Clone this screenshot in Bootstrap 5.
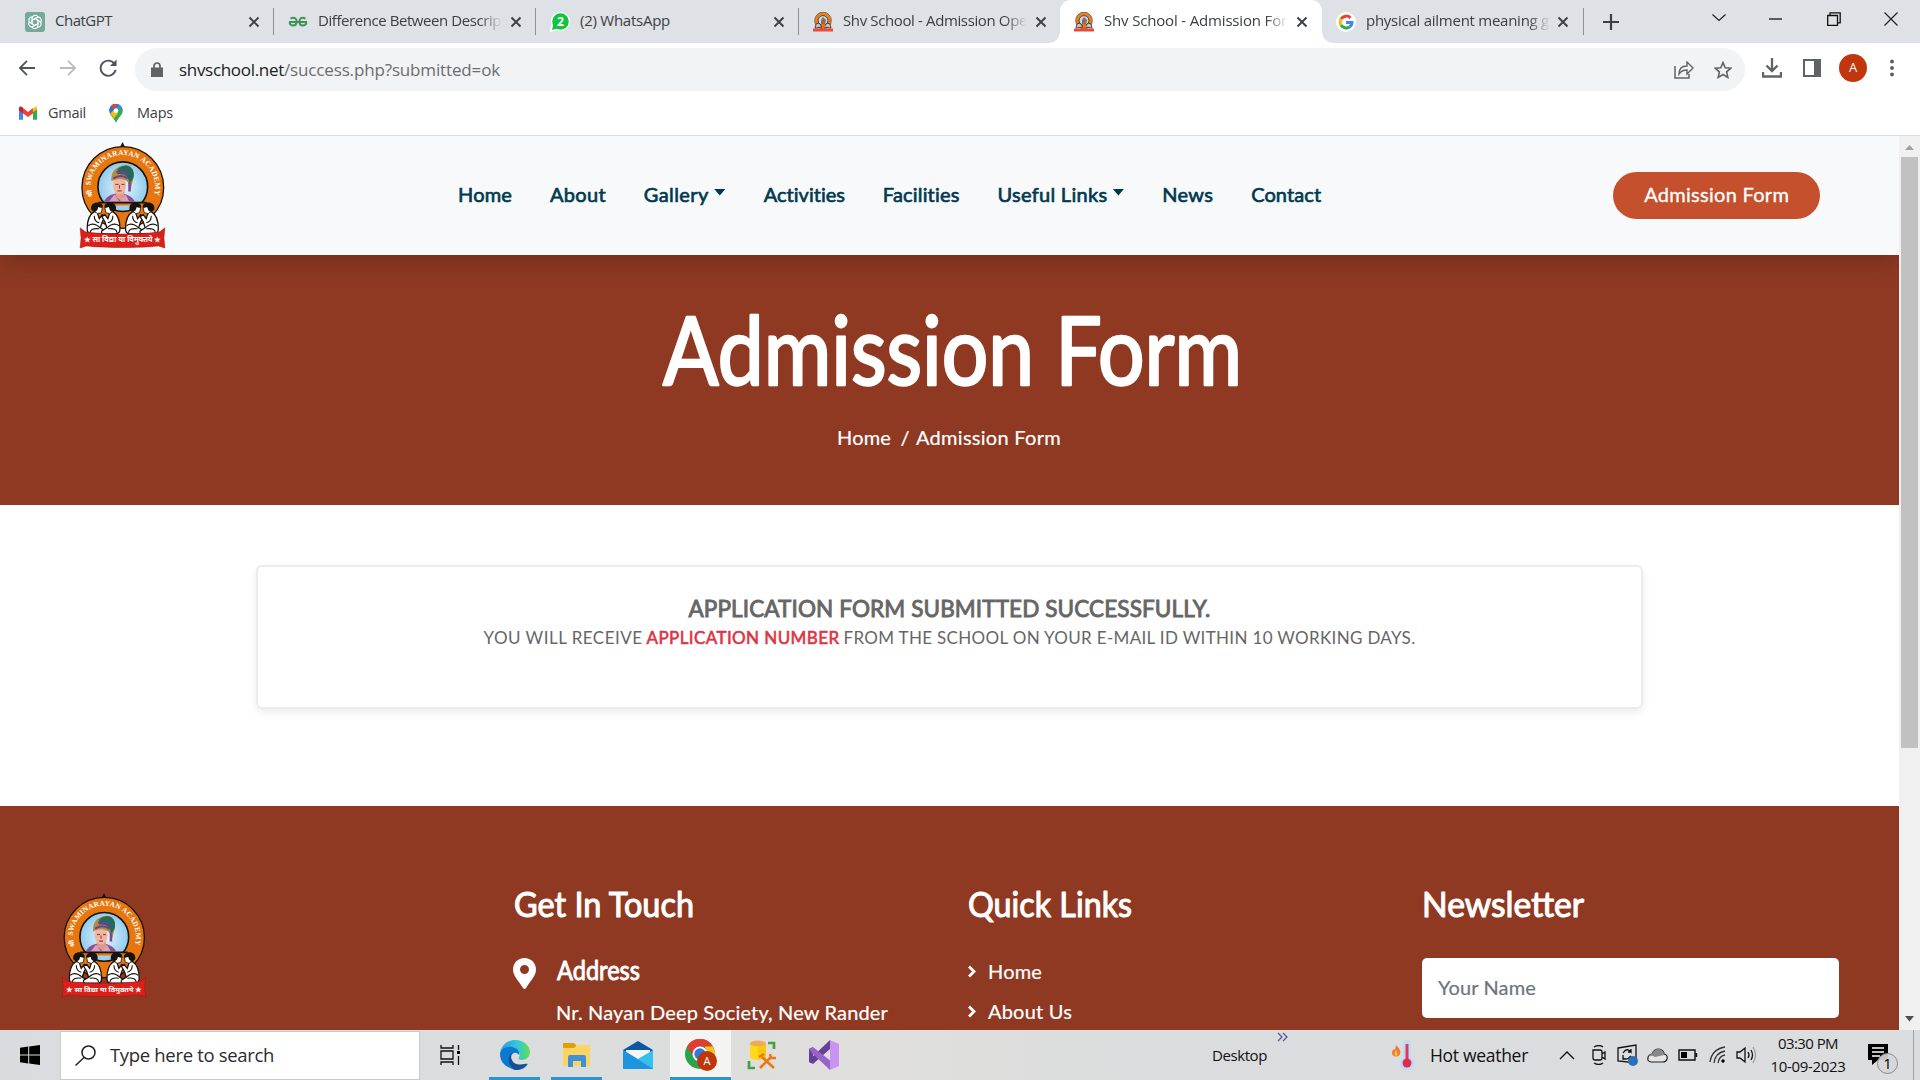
<!DOCTYPE html>
<html lang="en">
<head>
<meta charset="utf-8">
<title>Shv School - Admission Form</title>
<link href="https://cdn.jsdelivr.net/npm/bootstrap@5.3.0/dist/css/bootstrap.min.css" rel="stylesheet">
<style>
body{width:1920px;height:1080px;overflow:hidden;font-family:"Open Sans","Noto Sans",sans-serif;color:#3c4043}
svg{display:block;flex:none}
[data-w]{white-space:nowrap;display:inline-block;flex:none}
.tabstrip{height:43px;background:#dee1e6}
.btab{width:262px;height:43px;padding-left:25px;font-size:15px;position:relative;flex:none}
.btab .fav{width:20px;height:20px;margin-right:10px}
.btab .ttl{width:184px;overflow:hidden;white-space:nowrap;height:26px;line-height:22px}
.btab .fade-end{-webkit-mask-image:linear-gradient(90deg,#000 88%,transparent);mask-image:linear-gradient(90deg,#000 88%,transparent)}
.btab .cls{margin-left:9px}
.btab.sep{border-right:1.5px solid #8e9196;border-image:linear-gradient(transparent 9px,#8e9196 9px,#8e9196 34px,transparent 34px) 1}
.btab.on{background:#fff;border-radius:11px 11px 0 0}
.btab.on::before,.btab.on::after{content:"";position:absolute;bottom:0;width:11px;height:11px}
.btab.on::before{left:-11px;background:radial-gradient(circle at 0 0,transparent 10.5px,#fff 11px)}
.btab.on::after{right:-11px;background:radial-gradient(circle at 100% 0,transparent 10.5px,#fff 11px)}
.toolrow{height:48px;padding:5px 0 0 18px}
.omni{width:1610px;height:43px;border-radius:22px;background:#f1f3f4;margin-left:15px;padding-left:16px;font-size:17px;color:#6a6e73}
.omni b{font-weight:400;color:#202124}
.marks{height:45px;border-bottom:1.5px solid #d9dbdd;padding:0 0 0 19px;font-size:14.5px}
.avatar{width:28px;height:28px;border-radius:50%;background:#c1360d;color:#fff;font-size:13px}
.viewport{height:894px;overflow:hidden}
.site{width:1899px;height:894px;overflow:hidden;font-family:Lato,"Open Sans",sans-serif;font-size:20px;background:#fff}
.sitenav{height:119px;background:#f8f9fb;box-shadow:0 2px 26px rgba(0,0,0,.28);position:relative;z-index:2;padding-left:79px}
.navitems{gap:37.9px;margin-left:292px;color:#00394f}
.navitems span{-webkit-text-stroke:.65px #00394f;line-height:28px}
.navitems,.admit span{padding-bottom:4px}
.caretd{width:12px;height:7px;margin-left:5px;background:#00394f;clip-path:polygon(0 0,100% 0,50% 100%);margin-top:-3px}
.admit{width:207px;height:47px;border-radius:24px;background:#c5502d;color:#fff;margin-left:292px}
.admit span{-webkit-text-stroke:.3px #fff}
.hero,.foot{background:#8f3922;color:#fff}
.hero{height:250px;padding-top:44px}
.crumbs{margin-top:-1px;line-height:28px;padding-left:837px;gap:9.5px}
.crumbs span,.foot span{-webkit-text-stroke:.2px currentColor}
.body-part{height:301px;padding:60px 256px 0}
.notice{height:144px;border:2px solid #ebecec;border-radius:6px;box-shadow:0 4px 8px rgba(0,0,0,.07);color:#666;padding-top:28px}
.notice h5{font-size:22.5px;font-weight:400;line-height:28px;margin:0;-webkit-text-stroke:.9px #666}
.notice p{font-size:17px;line-height:30px;margin:0}
.notice .num{color:#dc3545;-webkit-text-stroke:.6px #dc3545}
.foot{height:224px;padding:78px 60px 0 61px}
.hand{overflow:visible}
.hand text{font-family:Lato,sans-serif;fill:#fff;stroke:#fff;stroke-linejoin:round}
.fcol{width:454px;flex:none}
.flogo{width:452px;padding-top:9px;flex:none}
.nameinput{width:417px;height:60px;background:#fff;border-radius:5px;color:#6c757d;padding-left:16px;padding-bottom:2px}
.links{line-height:40px;margin-top:-2px}
.sbar{width:21px;background:#f0f0f0}
.thumb{width:17px;height:591px;background:#c1c1c1}
.taskbar{height:50px;background:linear-gradient(90deg,#d9dbde,#dcdddd 35%,#e0dfdc 45%,#dadcdd 60%,#dcdddf);color:#111}
.searchbox{width:360px;height:49px;background:#fff;border:1px solid #c9cacc;font-size:18.5px;color:#2b2b2b;padding-left:14px}
.tk{height:50px;position:relative}
.tk.run::after{content:"";position:absolute;left:5px;right:5px;bottom:0;height:3px;background:#2b95d0}
.tk.cur{background:#f4f4f3}.tk.cur::after{left:0;right:0}
.clock{width:86px;font-size:15px;line-height:23px}
</style>
</head>
<body>
<svg width="0" height="0" class="position-absolute">
<defs>
<path id="arc" d="M41.600 66A32 32 0 1 1 103 66"/>
<radialGradient id="sky"><stop offset="0" stop-color="#e8f6fd"/><stop offset="1" stop-color="#8fcbee"/></radialGradient>
<clipPath id="portrait"><path d="M45 30h55v41H45z"/></clipPath>
<linearGradient id="edgeA" x1="0" x2="1"><stop offset="0" stop-color="#1fa0e6"/><stop offset=".6" stop-color="#35c8d8"/><stop offset="1" stop-color="#63e04a"/></linearGradient>
<symbol id="kid" viewBox="0 0 20 33">
<path d="M8 10C3 13 1 20 1 27q0 5 4 5h12q3 0 2-3l-5-3 2-6 3-5-3-2-3 4-2-6z" fill="#fff" stroke="#17130f" stroke-width="1.300"/>
<path d="M12 5l4 1-1 5-4 1-3-3z" fill="#fff" stroke="#17130f" stroke-width=".8"/>
<path d="M5 8C4 3 8 .500 12 1q5 1 4.500 5L12 5.500l-1 3q-3 3-6-.500z" fill="#17130f"/>
<path d="M8 14q0 6 5 7M2 24q5-4 12 2M4 31q0-5 9-4" fill="none" stroke="#17130f" stroke-width="1.100"/>
</symbol>
<symbol id="crest" viewBox="29 12 86 106">
<path d="M72 12l2.500 5h-5z" fill="#17130f"/>
<circle cx="72.300" cy="57" r="40.500" fill="#e8760f" stroke="#17130f" stroke-width="1.300"/>
<circle cx="72.300" cy="56.300" r="24.600" fill="url(#sky)" stroke="#17130f" stroke-width="1.600"/>
<path d="M52 72h40v3H52z" fill="#e8760f"/>
<g clip-path="url(#portrait)">
<path d="M53 73c2-7 8-9 12-10h8c6 2 10 4 12 10z" fill="#8e4a9b"/><path d="M57 73l7-9 5 7 6-7 5 9z" fill="#d9a0b8"/><path d="M65 58h9v8l-4 4-5-4z" fill="#dd9b88"/>
<ellipse cx="69" cy="55" rx="6.500" ry="9" fill="#f2b6a0"/>
<path d="M61 51c-1-9 4-15 13-16 7-1 10 5 9 12l-3 12c-1-6-3-9-8-10-4-1-8 0-11 2z" fill="#b58b3d"/>
<path d="M67 39c5-5 14-5 16 3 1 6-2 9-4 11-1-7-5-10-12-9z" fill="#226b5a"/><path d="M63 48c5-3 10-3 14 0M66 42c4-1 9 0 12 3" stroke="#6b3f9b" stroke-width="2" fill="none"/>
<path d="M79 52v9" stroke="#7a4595" stroke-width="2.500"/><path d="M65 54h3M71 54h3M69 55v3" stroke="#603028" stroke-width=".9"/><path d="M67 60.500h4" stroke="#b62f45" stroke-width="1.200"/>
</g>
<path d="M48 72h48" stroke="#17130f" stroke-width="1.800"/>
<text x="0" y="0" transform="translate(42.500 66) rotate(-102)" font-family="Noto Sans,sans-serif" font-size="6.500" font-weight="700" fill="#fff">श्री</text>
<text font-family="Liberation Serif,serif" font-weight="700" font-size="7.400" fill="#fff"><textPath href="#arc" textLength="106" lengthAdjust="spacing" startOffset="11">SWAMINARAYAN ACADEMY</textPath></text>
<use href="#kid" x="36" y="71" width="20" height="33"/>
<g transform="translate(124.500 0) scale(-1 1)"><use href="#kid" x="54" y="71" width="20" height="33"/></g>
<use href="#kid" x="74" y="71" width="20" height="33"/>
<g transform="translate(144.500 0) scale(-1 1)"><use href="#kid" x="36" y="71" width="20" height="33"/></g>
<path d="M30 97l5 4c20 3 54 3 74 0l5-4-1 10 1 10-6-2c-20 2-52 2-72 0l-6 2 1-10z" fill="#dc2019" stroke="#9e120e" stroke-width=".5"/>
<text x="72" y="111.500" text-anchor="middle" font-family="Noto Sans,sans-serif" font-size="7" font-weight="700" fill="#fff" textLength="76" lengthAdjust="spacingAndGlyphs">★ सा विद्या या विमुक्तये ★</text>
</symbol>
<symbol id="minicrest" viewBox="0 0 20 20"><circle cx="10" cy="8.500" r="8.300" fill="#e8831f" stroke="#6b5136" stroke-width=".8"/><circle cx="10" cy="8.500" r="4.900" fill="#b9def0" stroke="#3a2a20" stroke-width=".8"/><path d="M8 13V8l2-3 3 3-1 5z" fill="#a4625d"/><path d="M2 16l1-4 3-1 3 4zM18 16l-1-4-3-1-3 4z" fill="#c9c4bd" stroke="#30261f" stroke-width=".8"/><path d="M8 12h4v3l-2 2z" fill="#e0790d"/><path d="M0 16.500h20v3H0z" fill="#ea4a3c"/></symbol>
<symbol id="x" viewBox="0 0 12 12"><path d="M1.500 1.500l9 9M10.500 1.500l-9 9" stroke="#3c4043" stroke-width="1.900"/></symbol>
</defs></svg>

<header class="tabstrip d-flex align-items-center">
 <div class="btab sep d-flex align-items-center" style="width:274px">
  <svg class="fav" viewBox="0 0 20 20"><rect width="20" height="20" rx="3" fill="#75a99a"/><g fill="none" stroke="#fff" stroke-width="1.100"><path id="pet" d="M7 10V6.500a3.200 3.200 0 0 1 6-1.500M10 6.600l3.500 2"/><use href="#pet" transform="rotate(60 10 10)"/><use href="#pet" transform="rotate(120 10 10)"/><use href="#pet" transform="rotate(180 10 10)"/><use href="#pet" transform="rotate(240 10 10)"/><use href="#pet" transform="rotate(300 10 10)"/></g></svg>
  <div class="ttl"><span data-w="57">ChatGPT</span></div><svg class="cls" width="12" height="12"><use href="#x"/></svg></div>
 <div class="btab sep d-flex align-items-center" style="padding-left:14px">
  <svg class="fav" viewBox="0 0 20 20"><path d="M1 10h18M2.500 6.500c5-2 6.500 1 6 4-.6 4-6 4-7 0M17.500 6.500c-5-2-6.500 1-6 4 .6 4 6 4 7 0" fill="none" stroke="#3f9556" stroke-width="2"/></svg>
  <div class="ttl fade-end"><span data-w="183">Difference Between Descrip</span></div><svg class="cls" width="12" height="12" style="margin-left:8px"><use href="#x"/></svg></div>
 <div class="btab sep d-flex align-items-center" style="width:263px;padding-left:14px">
  <svg class="fav" viewBox="0 0 20 20"><circle cx="10.500" cy="9.500" r="9.500" fill="#fff"/><path d="M0 20l1-7 6 5z" fill="#fff"/><circle cx="10.500" cy="9.500" r="8.300" fill="#15c343"/><path d="M2 18l1.500-6 4 4.500z" fill="#15c343"/><text x="10.500" y="14" text-anchor="middle" font-size="12" font-weight="700" fill="#fff">2</text></svg>
  <div class="ttl"><span data-w="90">(2) WhatsApp</span></div><svg class="cls" width="12" height="12"><use href="#x"/></svg></div>
 <div class="btab d-flex align-items-center" style="width:261px;padding-left:14px"><svg class="fav" width="20" height="20"><use href="#minicrest"/></svg>
  <div class="ttl fade-end"><span data-w="184">Shv School - Admission Ope</span></div><svg class="cls" width="12" height="12" style="margin-left:8px"><use href="#x"/></svg></div>
 <div class="btab on d-flex align-items-center" style="padding-left:14px"><svg class="fav" width="20" height="20"><use href="#minicrest"/></svg>
  <div class="ttl fade-end"><span data-w="183">Shv School - Admission For</span></div><svg class="cls" width="12" height="12" style="margin-left:8px"><use href="#x"/></svg></div>
 <div class="btab sep d-flex align-items-center" style="width:262px;padding-left:14px">
  <svg class="fav" viewBox="0 0 20 20"><circle cx="10" cy="10" r="10" fill="#fff"/><g fill="none" stroke-width="3"><path d="M14.500 6a6 6 0 0 0-9.500 1" stroke="#ea4335"/><path d="M5 7a6 6 0 0 0 0 6" stroke="#fbbc05"/><path d="M5 13a6 6 0 0 0 8.500 2" stroke="#34a853"/><path d="M13.500 15c2-1.300 2.500-3 2.500-4.500h-6" stroke="#4285f4"/></g></svg>
  <div class="ttl fade-end"><span data-w="183">physical ailment meaning g</span></div><svg class="cls" width="12" height="12" style="margin-left:7px"><use href="#x"/></svg></div>
 <svg width="16" height="16" style="margin-left:19px"><path d="M8 0v16M0 8h16" stroke="#3c4043" stroke-width="2.200"/></svg>
 <svg class="mb-2" width="14" height="8" style="margin-left:93px"><path d="M.500 .500l6.500 6 6.500-6" fill="none" stroke="#222" stroke-width="1.200"/></svg>
 <svg width="13" height="2" style="margin:0 0 5px 43px"><path d="M0 1h13" stroke="#111" stroke-width="1.300"/></svg>
 <svg width="14" height="14" style="margin:0 0 6px 45px"><path d="M.700 3.500h9.800v9.800H.700zM3 3.500V.800h10.200v10h-2.700" fill="none" stroke="#111" stroke-width="1.300"/></svg>
 <svg width="14" height="14" style="margin:0 0 6px 43px"><path d="M.500 .500l13 13M13.500 .500l-13 13" stroke="#222" stroke-width="1.200"/></svg>
</header>

<div class="toolrow d-flex align-items-center bg-white">
 <svg class="mb-1" width="18" height="16" viewBox="0 0 20 18"><path d="M19 9H3M10 1L2 9l8 8" fill="none" stroke="#50545a" stroke-width="2"/></svg>
 <svg class="mb-1" width="18" height="16" viewBox="0 0 20 18" style="margin-left:23px"><path d="M1 9h16M10 1l8 8-8 8" fill="none" stroke="#b9bbbe" stroke-width="2"/></svg>
 <svg class="mb-1" width="19" height="18" viewBox="0 0 20 18" style="margin-left:22px"><path d="M16.500 5A8 8 0 1 0 17.500 11" fill="none" stroke="#50545a" stroke-width="2"/><path d="M18.500 0v7h-7z" fill="#50545a"/></svg>
 <div class="omni d-flex align-items-center" style="margin-left:17px">
  <svg width="12" height="15" viewBox="0 0 12 15"><path d="M0 5.500h12V15H0z" fill="#5f6368"/><path d="M3 6V4a3 3 0 0 1 6 0v2" fill="none" stroke="#5f6368" stroke-width="1.700"/></svg>
  <div class="flex-grow-1 ms-3"><b data-w="105">shvschool.net</b><span data-w="216">/success.php?submitted=ok</span></div>
  <svg width="20" height="18" viewBox="0 0 20 18"><path d="M1 5v12h14v-4" fill="none" stroke="#5f6368" stroke-width="1.500"/><path d="M5 13c0-6 4-8 8-8V1l6 6-6 6V9c-4 0-6 1-8 4z" fill="none" stroke="#5f6368" stroke-width="1.400"/></svg>
  <svg width="18" height="18" viewBox="0 0 18 18" style="margin:0 13px 0 20px"><path d="M9 1.500l2.200 5.200 5.600.500-4.200 3.700 1.200 5.500L9 13.500l-4.800 2.900 1.200-5.500L1.200 7.200l5.600-.500z" fill="none" stroke="#5f6368" stroke-width="1.600"/></svg>
 </div>
 <svg class="mb-1" width="20" height="20" viewBox="0 0 20 20" style="margin-left:17px"><path d="M10 0v12M4.500 7.500L10 13l5.500-5.500M1 14v4.500h18V14" fill="none" stroke="#5f6368" stroke-width="2.300"/></svg>
 <svg class="mb-1" width="18" height="18" viewBox="0 0 18 18" style="margin-left:21px"><path d="M1 1h16v16H1z" fill="none" stroke="#5f6368" stroke-width="2"/><path d="M11 1h6v16h-6z" fill="#5f6368"/></svg>
 <div class="avatar d-flex align-items-center justify-content-center mb-1" style="margin-left:18px">A</div>
 <svg class="mb-1" width="6" height="18" style="margin-left:22px"><g fill="#5f6368"><circle cx="3" cy="2.500" r="2"/><circle cx="3" cy="9" r="2"/><circle cx="3" cy="15.500" r="2"/></g></svg>
</div>
<div class="marks d-flex align-items-center bg-white">
 <svg width="18" height="14" viewBox="0 0 20 15"><path d="M0 3v12h4.500V6z" fill="#4285f4"/><path d="M20 3v12h-4.500V6z" fill="#34a853"/><path d="M15.500 3L18 .500c1.500-.500 2 1 2 2.500L15.500 7z" fill="#fbbc04"/><path d="M4.500 2l5.500 4.500L15.500 2v6L10 12 4.500 8z" fill="#ea4335"/><path d="M0 3C0 0 2-.500 4.500 2v6L0 4.500z" fill="#c5221f"/></svg>
 <span data-w="38" style="margin-left:11px">Gmail</span>
 <svg width="14" height="19" viewBox="0 0 14 20" style="margin-left:23px"><path d="M7 0c4 0 7 3 7 7 0 5-5 7-7 13C5 14 0 12 0 7c0-4 3-7 7-7z" fill="#34a853"/><path d="M7 0l3 .500L2 11C1 9 0 8 0 6l1-3z" fill="#1a73e8"/><path d="M1 3a7 7 0 0 1 8-3L5 5z" fill="#ea4335"/><path d="M9 0c3 1 5 4 5 7L10 5z" fill="#4285f4"/><path d="M1 10l4-4 4 4-4 5z" fill="#fbbc04"/><circle cx="7" cy="7" r="2.500" fill="#fff"/></svg>
 <span data-w="36" style="margin-left:14px">Maps</span>
</div>

<div class="viewport d-flex">
<main class="site">
 <nav class="sitenav d-flex align-items-center">
  <svg width="87" height="107"><use href="#crest"/></svg>
  <div class="navitems d-flex align-items-center">
   <span data-w="54">Home</span><span data-w="56">About</span>
   <div class="d-flex align-items-center"><span data-w="65">Gallery</span><i class="caretd"></i></div>
   <span data-w="82">Activities</span><span data-w="77">Facilities</span>
   <div class="d-flex align-items-center"><span data-w="110">Useful Links</span><i class="caretd"></i></div>
   <span data-w="51">News</span><span data-w="70">Contact</span>
  </div>
  <div class="admit d-flex align-items-center justify-content-center"><span data-w="145">Admission Form</span></div>
 </nav>
 <section class="hero">
  <svg class="hand" width="1899" height="125"><text x="663" y="86" font-size="95" stroke-width="2.600" textLength="579" lengthAdjust="spacingAndGlyphs">Admission Form</text></svg>
  <div class="crumbs d-flex"><span data-w="54">Home</span><span data-w="6">/</span><span data-w="145">Admission Form</span></div>
 </section>
 <section class="body-part">
  <div class="notice text-center">
   <h5><span data-w="522">APPLICATION FORM SUBMITTED SUCCESSFULLY.</span></h5>
   <p><span data-w="159">YOU WILL RECEIVE</span><span class="num" data-w="193" style="margin:0 4px">APPLICATION NUMBER</span><span data-w="572">FROM THE SCHOOL ON YOUR E-MAIL ID WITHIN 10 WORKING DAYS.</span></p>
  </div>
 </section>
 <footer class="foot d-flex">
  <div class="flogo"><svg width="86" height="105"><use href="#crest"/></svg></div>
  <div class="fcol">
   <svg class="hand" width="220" height="74"><text x="1" y="33" font-size="35" stroke-width="1.100" textLength="180" lengthAdjust="spacingAndGlyphs">Get In Touch</text></svg>
   <div class="d-flex">
    <svg width="23" height="31" viewBox="0 0 23 31"><path fill-rule="evenodd" d="M11.500 0C18 0 23 5 23 11.500 23 17 19 21 13 30q-1.500 2-3 0C4 21 0 17 0 11.500 0 5 5 0 11.500 0zm0 7a4.500 4.500 0 1 0 0 9 4.500 4.500 0 0 0 0-9z" fill="#fff"/></svg>
    <div style="margin-left:20px"><svg class="hand" width="120" height="36"><text x="1" y="21.500" font-size="26.500" stroke-width=".9" textLength="83" lengthAdjust="spacingAndGlyphs">Address</text></svg>
     <div class="links"><span data-w="332">Nr. Nayan Deep Society, New Rander</span></div></div>
   </div>
  </div>
  <div class="fcol">
   <svg class="hand" width="220" height="69"><text x="1" y="33" font-size="35" stroke-width="1.100" textLength="164" lengthAdjust="spacingAndGlyphs">Quick Links</text></svg>
   <div class="links">
    <div class="d-flex align-items-center"><svg width="10" height="13" style="margin-right:11px"><path d="M2 1.500l5 5-5 5" fill="none" stroke="#fff" stroke-width="2.800"/></svg><span data-w="54">Home</span></div>
    <div class="d-flex align-items-center"><svg width="10" height="13" style="margin-right:11px"><path d="M2 1.500l5 5-5 5" fill="none" stroke="#fff" stroke-width="2.800"/></svg><span data-w="84">About Us</span></div>
   </div>
  </div>
  <div style="margin-left:1px">
   <svg class="hand" width="220" height="74"><text x="0" y="33" font-size="35" stroke-width="1.100" textLength="162" lengthAdjust="spacingAndGlyphs">Newsletter</text></svg>
   <div class="nameinput d-flex align-items-center"><span data-w="98">Your Name</span></div>
  </div>
 </footer>
</main>
<aside class="sbar d-flex flex-column align-items-center">
 <svg width="9" height="21"><path d="M0 14l4.500-5L9 14z" fill="#a0a0a0"/></svg>
 <div class="thumb"></div>
 <svg class="mt-auto" width="9" height="21"><path d="M0 7h9l-4.500 5.500z" fill="#505050"/></svg>
</aside>
</div>

<footer class="taskbar d-flex align-items-center">
 <svg width="20" height="20" viewBox="0 0 20 20" style="margin:0 20px"><path d="M0 2.700L8.200 1.500v8H0zM9.200 1.400L20 0v9.500H9.200zM0 10.500h8.200v8L0 17.300zM9.200 10.500H20V20L9.200 18.600z"/></svg>
 <div class="searchbox d-flex align-items-center">
  <svg width="21" height="21"><circle cx="13.500" cy="7.500" r="6.500" fill="none" stroke="#222" stroke-width="1.500"/><path d="M9 12.500l-8.500 8" stroke="#222" stroke-width="1.500"/></svg>
  <span data-w="164" style="margin-left:14px">Type here to search</span>
 </div>
 <svg width="21" height="20" style="margin-left:20px"><path d="M1 0v3h12V0M1 20v-3h12v3M1 6h12v8H1zM18.500 0v5M18.500 11v9" fill="none" stroke="#111" stroke-width="1.300"/><path d="M17 6h3v3h-3z"/></svg>
 <div class="tk run d-flex align-items-center justify-content-center" style="width:61px;margin-left:23px">
  <svg width="30" height="30" viewBox="0 0 30 30"><path d="M0 14C1 5 8 0 15 0c9 0 15 6 15 12 0 5-4 8-8 8-3 0-4-1-3-3 2-5-2-7-6-7-5 0-9 1-13 4z" fill="url(#edgeA)"/><path d="M0 14c1-5 6-8 12-7 5 1 8 4 7 8-3-4-8-2-8 3 0 8 9 10 17 6-4 6-12 8-18 4C3 25 0 20 0 14z" fill="#0c79cf"/><path d="M12 13c-6 5-3 13 3 17 6 0 10-3 12.500-6-1-1-13 4-16-5-1-3 0-5 .500-6z" fill="#174f97"/></svg></div>
 <div class="tk run d-flex align-items-center justify-content-center" style="width:61px;margin-left:1px">
  <svg width="28" height="25" viewBox="0 0 28 25"><path d="M0 0h11l2 2v4H0z" fill="#dfa00c"/><path d="M0 5h11l3-3h13v21H0z" fill="#fcd462"/><path d="M5 24V14q0-2 2-2h14q2 0 2 2v10h-5v-6h-8v6z" fill="#3b92d8"/></svg></div>
 <div class="tk d-flex align-items-center justify-content-center" style="width:61px"><svg width="30" height="28" viewBox="0 0 30 28"><path d="M0 9L15 0l15 9v10H0z" fill="#0c58a5"/><path d="M3 9h24v12H3z" fill="#f4f6f8"/><path d="M0 9l15 9L30 9v19H0z" fill="#35c0ee"/><path d="M0 9l30 19H0z" fill="#1e94de"/></svg></div>
 <div class="tk run cur d-flex align-items-center justify-content-center" style="width:61px;margin-left:2px"><svg width="32" height="32" viewBox="0 0 32 32"><circle cx="15" cy="15" r="15" fill="#2ba24c"/><path d="M2 7.500A15 15 0 0 1 28 7.500H15L9 18z" fill="#e33b2e"/><path d="M28 7.500A15 15 0 0 1 15 30l7-12-2-10.500z" fill="#fcc31e"/><circle cx="15" cy="15" r="7.500" fill="#fff"/><circle cx="15" cy="15" r="5.700" fill="#2f78e8"/><circle cx="22" cy="22" r="10" fill="#bf360c"/><text x="22" y="26" text-anchor="middle" font-size="11" fill="#fff">A</text></svg></div>
 <svg width="30" height="30" viewBox="0 0 30 30" style="margin-left:16px"><path d="M3 3h16v15q-8 4-16 0z" fill="#ffd91a"/><path d="M11 4h8v15h-8z" fill="#f9c80d"/><ellipse cx="11" cy="3.500" rx="8" ry="3" fill="#efab52"/><path d="M21 3h6v6M2 21v7h6" fill="none" stroke="#43a047" stroke-width="2.700"/><path d="M13 28l11-11M15 17l12 11M12 17l5-3M23 14l1 4h5" fill="none" stroke="#ee7512" stroke-width="2.500"/></svg>
 <svg width="30" height="30" viewBox="0 0 30 30" style="margin-left:32px"><path d="M0 22l4 2L21 9V0L0 20z" fill="#664199"/><path d="M0 9l4-2v16l-4-1z" fill="#664199"/><path d="M0 9l4-2 19 15-2 8L4 14z" fill="#9a63cc"/><path d="M21 0l9 4v22l-9 4z" fill="#c893f5"/></svg>
 <span data-w="55" style="margin-left:373px;font-size:15px">Desktop</span>
 <svg width="12" height="10" style="margin:0 0 36px 10px"><path d="M1 1l4 4-4 4M6 1l4 4-4 4" fill="none" stroke="#5a589c" stroke-width="1.300"/></svg>
 <svg width="25" height="30" viewBox="0 0 25 30" style="margin-left:102px"><path d="M12 4q0-4 4-4t4 4v14c7 5 2 12-4 12s-11-7-4-12z" fill="#bcdcf7"/><path d="M16 4v18" stroke="#e53a57" stroke-width="3"/><circle cx="16" cy="23" r="4.500" fill="#e02b4c"/><path d="M5 5c4 4 5 6 4 9-2 4-8 3-8-1 0-2 1-3 2-4l1 1z" fill="#f47732"/><path d="M5 10q3 5 0 6-3-1 0-6" fill="#ffc43b"/></svg>
 <span data-w="98" style="margin-left:14px;font-size:17.500px">Hot weather</span>
 <svg width="16" height="10" style="margin-left:31px"><path d="M1 9l7-7 7 7" fill="none" stroke="#111" stroke-width="1.400"/></svg>
 <svg width="15" height="20" style="margin-left:16px"><path d="M2 5h7q2 0 2 2v6q0 2-2 2H4q-2 0-2-2zM11 9l3-2v7l-3-2M3 2q5-3 9 0M3 18q5 3 9 0" fill="none" stroke="#111" stroke-width="1.300"/></svg>
 <svg width="21" height="22" style="margin-left:11px"><path d="M1 4l18-3v18L1 17z" fill="none" stroke="#111" stroke-width="1.300"/><path d="M6 9q4-6 8-1V5M14 8h-3M6 11v4h3M6 14q4 3 8-2" fill="none" stroke="#111" stroke-width="1.300"/><circle cx="16" cy="17" r="5" fill="#2b70b8"/></svg>
 <svg width="21" height="15" style="margin-left:9px"><path d="M4 14q-4-1-3-4 0-3 4-4 2-5 7-5 5 1 5 5 4 1 3 5-1 3-4 3z" fill="#e4e4e4" stroke="#222" stroke-width="1.200"/><path d="M2 8q1-2 3-2 2-5 7-5 5 1 5 6L8 9q-3-2-6-1z" fill="#888"/></svg>
 <svg width="20" height="12" style="margin-left:10px"><path d="M1 1h16v10H1zM18.500 4v4" fill="none" stroke="#111" stroke-width="1.400"/><path d="M3 3h6v6H3z"/></svg>
 <svg width="17" height="18" style="margin-left:11px"><path d="M1 16Q3 3 16 1M5 17Q6 7 16 5M9 17q1-7 7-8" fill="none" stroke="#333" stroke-width="1.300"/><circle cx="14" cy="15" r="1.700"/></svg>
 <svg width="21" height="20" style="margin-left:10px"><path d="M1 7h3l5-4v14l-5-4H1zM12 7q2 3 0 6M15 5q3 5 0 10" fill="none" stroke="#111" stroke-width="1.300"/><path d="M17 2q5 8 0 16" fill="none" stroke="#999" stroke-width="1.200"/></svg>
 <div class="clock text-center" style="margin-left:8px"><span data-w="60">03:30 PM</span><br><span data-w="75">10-09-2023</span></div>
 <svg width="31" height="34" viewBox="0 0 31 34" style="margin:6px 0 0 17px"><path d="M0 3h20v16H10l-6 5v-5H0z"/><path d="M4 7h12M4 11h12M4 15h8" stroke="#fff" stroke-width="1.400"/><circle cx="19.500" cy="22.500" r="10" fill="#d5d6d7" fill-opacity=".92" stroke="#8b8b8b"/><text x="19.500" y="28" text-anchor="middle" font-size="15">1</text></svg>
 <svg width="1" height="50" style="margin-left:14px"><path d="M.500 0v50" stroke="#a0a2a4"/></svg>
</footer>
<script src="https://cdn.jsdelivr.net/npm/bootstrap@5.3.0/dist/js/bootstrap.bundle.min.js"></script>
<script>
// Track each label so that it fills its declared width.
document.querySelectorAll('[data-w]').forEach(function(e){
  var w=e.getBoundingClientRect().width,n=e.textContent.length;
  e.style.letterSpacing=((+e.dataset.w-w)/n).toFixed(3)+'px';
});
</script>
</body>
</html>
